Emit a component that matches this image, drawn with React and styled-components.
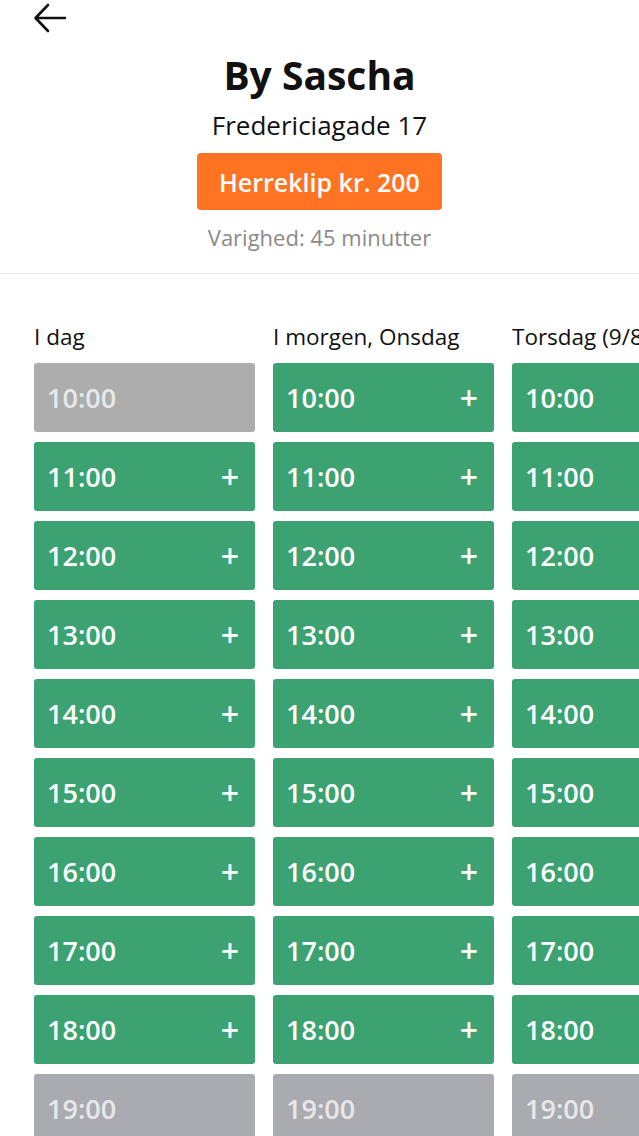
import React from "react"
import styled, { createGlobalStyle } from "styled-components"

const GlobalStyle = createGlobalStyle`
  html, body {
    margin: 0;
    padding: 0;
    background: #ffffff;
    font-family: "Open Sans", "Noto Sans", sans-serif;
    -webkit-font-smoothing: antialiased;
  }
`

const Page = styled.div`
  width: 639px;
  height: 1136px;
  overflow: hidden;
  background: #ffffff;
`

const TopBar = styled.div`
  height: 40px;
  padding-left: 32px;
  display: flex;
  align-items: flex-start;
`

const BackButton = styled.button`
  border: none;
  background: none;
  padding: 0;
  margin: 0;
  width: 40px;
  height: 40px;
  cursor: pointer;
  display: flex;
  align-items: flex-start;
`

const Header = styled.div`
  display: flex;
  flex-direction: column;
  align-items: center;
  padding-bottom: 22px;
  border-bottom: 1px solid #e6e6e6;
`

const Title = styled.h1`
  margin: 13px 0 0;
  font-size: 39px;
  line-height: 44px;
  font-weight: 700;
  color: #111;
`

const Address = styled.div`
  margin-top: 11px;
  font-size: 26px;
  line-height: 34px;
  color: #111;
`

const ServiceButton = styled.button`
  margin-top: 11px;
  width: 245px;
  height: 57px;
  border: none;
  border-radius: 4px;
  background: #ff7422;
  color: #fff;
  font-family: inherit;
  font-size: 25px;
  font-weight: 600;
`

const Duration = styled.div`
  margin-top: 13px;
  font-size: 22px;
  line-height: 28px;
  color: #8a8a8a;
`

const Schedule = styled.div`
  display: flex;
  gap: 18px;
  padding: 49px 0 0 34px;
`

const Day = styled.div`
  flex: 0 0 221px;
  display: flex;
  flex-direction: column;
  gap: 10px;
`

const DayLabel = styled.div`
  font-size: 22.5px;
  line-height: 28px;
  color: #111;
  white-space: nowrap;
  margin-bottom: 2px;
`

const Slot = styled.div`
  height: 69px;
  border-radius: 3px;
  background: ${(p) => (p.$free ? "#3ca271" : p.$past ? "#adadad" : "#aaabb1")};
  color: ${(p) => (p.$free ? "#ffffff" : "#e8e8ea")};
  display: flex;
  align-items: center;
  justify-content: space-between;
  padding: 0 16px 0 13px;
  font-size: 27px;
  font-weight: 600;
`

const Plus = styled.span`
  font-size: 32px;
  font-weight: 600;
  line-height: 1;
`

const days = [
  { label: "I dag", past: ["10:00"] },
  { label: "I morgen, Onsdag", past: [] },
  { label: "Torsdag (9/8)", past: [] },
]

const times = ["10:00", "11:00", "12:00", "13:00", "14:00", "15:00", "16:00", "17:00", "18:00", "19:00"]
const closed = ["19:00"]

const App = () => {
  return (
    <Page>
      <GlobalStyle />
      <TopBar>
        <BackButton aria-label="Tilbage">
          <svg width="36" height="36" viewBox="0 0 36 36" fill="none" stroke="#111" strokeWidth="2.6" strokeLinecap="round" strokeLinejoin="round">
            <path d="M33 18H4M16 5L3.5 18L16 31" />
          </svg>
        </BackButton>
      </TopBar>
      <Header>
        <Title>By Sascha</Title>
        <Address>Fredericiagade 17</Address>
        <ServiceButton>Herreklip kr. 200</ServiceButton>
        <Duration>Varighed: 45 minutter</Duration>
      </Header>
      <Schedule>
        {days.map((d) => (
          <Day key={d.label}>
            <DayLabel>{d.label}</DayLabel>
            {times.map((t) => {
              const past = d.past.includes(t)
              const free = !past && !closed.includes(t)
              return (
                <Slot key={t} $free={free} $past={past}>
                  <span>{t}</span>
                  {free && <Plus>+</Plus>}
                </Slot>
              )
            })}
          </Day>
        ))}
      </Schedule>
    </Page>
  )
}

export default App
